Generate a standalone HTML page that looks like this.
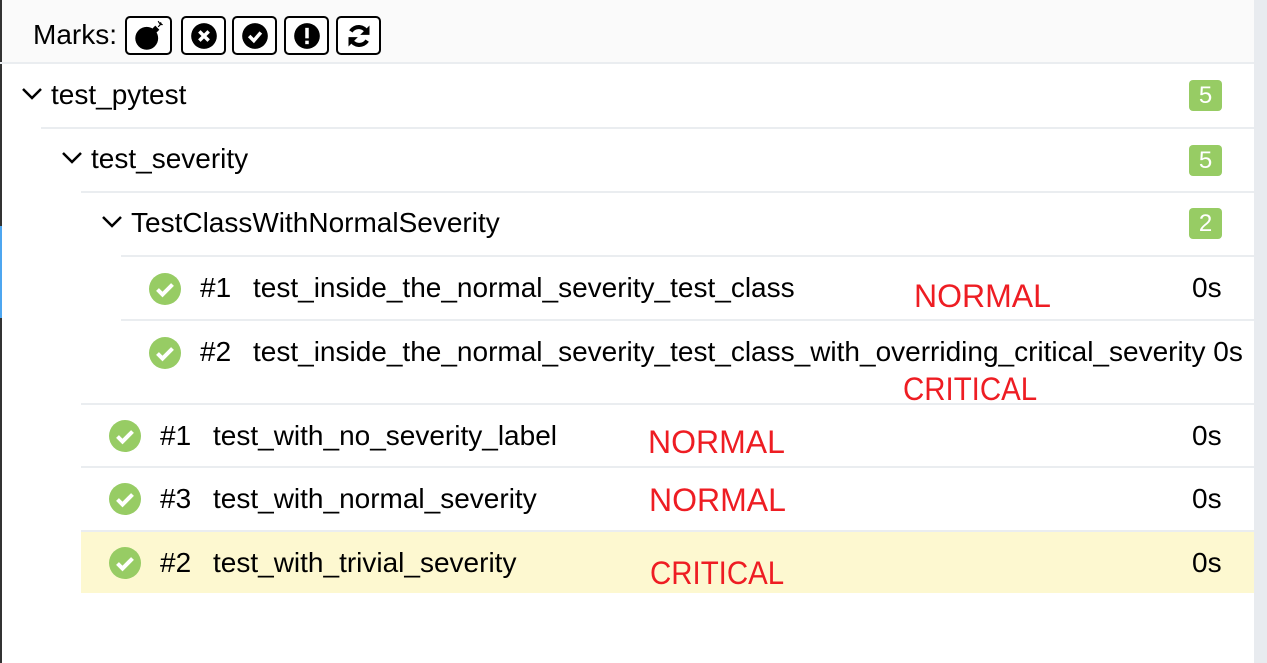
<!DOCTYPE html>
<html><head><meta charset="utf-8"><style>
*{margin:0;padding:0;box-sizing:border-box}
body{width:1267px;height:663px;overflow:hidden;background:#fff;font-family:"Liberation Sans",Arial,sans-serif;position:relative;color:#000}
.a{position:absolute;white-space:nowrap}
.t{font-size:28px;line-height:32px}
.sep{position:absolute;height:2px;background:#eaedf0}
.badge{position:absolute;left:1189px;width:33px;height:31px;background:#97cc64;border-radius:4px;color:#fff;font-size:24px;text-align:center;line-height:31px}
.red{position:absolute;color:#ee1d23;font-size:32px;line-height:36px;white-space:nowrap}
.crit{transform:scaleX(0.92);transform-origin:left center}
.btn{position:absolute;top:16px;width:45px;height:39px;border:2px solid #000;border-radius:5px;background:#fff;display:flex;align-items:center;justify-content:center}
.chk{position:absolute;width:32px;height:32px}
.chev{position:absolute;width:20px;height:12px}
</style></head><body>
<div class="a" style="left:0;top:0;width:1254px;height:63px;background:#fafafa"></div>
<div class="a" style="left:1254px;top:0;width:13px;height:663px;background:#e8ebef"></div>
<div class="a" style="left:0;top:0;width:2px;height:663px;background:#333"></div>
<div class="a" style="left:0;top:226px;width:2px;height:92px;background:#4da6f0"></div>
<div class="sep" style="left:0;top:62px;width:1254px"></div>

<div class="a t" style="left:33px;top:19px">Marks:</div>
<div class="btn" style="left:125px;width:47px"><svg width="32" height="32" viewBox="0 0 28 28"><circle cx="12" cy="16" r="10" fill="#000"/><rect x="17" y="6" width="5" height="5" transform="rotate(45 19.5 8.5)" fill="#000"/><path d="M22 6l2-2M24 2l1 2M22 1l2 3M26 4l-2 0" stroke="#000" stroke-width="1"/></svg></div>
<div class="btn" style="left:181px"><svg width="28" height="28" viewBox="0 0 24 24"><circle cx="12" cy="12" r="11" fill="#000"/><path d="M8 8l8 8M16 8l-8 8" stroke="#fff" stroke-width="3"/></svg></div>
<div class="btn" style="left:232px"><svg width="28" height="28" viewBox="0 0 24 24"><circle cx="12" cy="12" r="11" fill="#000"/><path d="M7 12l4 4 6-7" stroke="#fff" stroke-width="3" fill="none"/></svg></div>
<div class="btn" style="left:284px"><svg width="28" height="28" viewBox="0 0 24 24"><circle cx="12" cy="12" r="11" fill="#000"/><rect x="10.5" y="5" width="3" height="9" fill="#fff"/><rect x="10.5" y="16" width="3" height="3" fill="#fff"/></svg></div>
<div class="btn" style="left:336px"><svg width="28" height="28" viewBox="0 0 24 24"><path d="M19 9A8 8 0 0 0 5 8" stroke="#000" stroke-width="3.5" fill="none"/><path d="M21 3v8h-8z" fill="#000"/><path d="M5 15a8 8 0 0 0 14 1" stroke="#000" stroke-width="3.5" fill="none"/><path d="M3 21v-8h8z" fill="#000"/></svg></div>

<svg class="chev" style="left:22px;top:88px" viewBox="0 0 20 12"><path d="M1 1l9 9 9-9" stroke="#000" stroke-width="2.5" fill="none"/></svg>
<div class="a t" style="left:51px;top:79px">test_pytest</div>
<div class="badge" style="top:80px">5</div>
<div class="sep" style="left:41px;top:127px;width:1213px"></div>

<svg class="chev" style="left:62px;top:152px" viewBox="0 0 20 12"><path d="M1 1l9 9 9-9" stroke="#000" stroke-width="2.5" fill="none"/></svg>
<div class="a t" style="left:91px;top:143px">test_severity</div>
<div class="badge" style="top:145px">5</div>
<div class="sep" style="left:81px;top:191px;width:1173px"></div>

<svg class="chev" style="left:102px;top:216px" viewBox="0 0 20 12"><path d="M1 1l9 9 9-9" stroke="#000" stroke-width="2.5" fill="none"/></svg>
<div class="a t" style="left:131px;top:207px">TestClassWithNormalSeverity</div>
<div class="badge" style="top:208px">2</div>
<div class="sep" style="left:121px;top:255px;width:1133px"></div>

<svg class="chk" style="left:149px;top:273px" viewBox="0 0 32 32"><circle cx="16" cy="16" r="16" fill="#97cc64"/><path d="M8.5 16.5l5 5 10-10" stroke="#fff" stroke-width="4" fill="none"/></svg>
<div class="a t" style="left:200px;top:272px">#1</div>
<div class="a t" style="left:253px;top:272px">test_inside_the_normal_severity_test_class</div>
<div class="a t" style="left:1192px;top:272px">0s</div>
<div class="red" style="left:914px;top:278px">NORMAL</div>
<div class="sep" style="left:121px;top:319px;width:1133px"></div>

<svg class="chk" style="left:149px;top:337px" viewBox="0 0 32 32"><circle cx="16" cy="16" r="16" fill="#97cc64"/><path d="M8.5 16.5l5 5 10-10" stroke="#fff" stroke-width="4" fill="none"/></svg>
<div class="a t" style="left:200px;top:336px">#2</div>
<div class="a t" style="left:253px;top:336px">test_inside_the_normal_severity_test_class_with_overriding_critical_severity 0s</div>
<div class="red crit" style="left:903px;top:371px">CRITICAL</div>
<div class="sep" style="left:81px;top:403px;width:1173px"></div>

<svg class="chk" style="left:109px;top:420px" viewBox="0 0 32 32"><circle cx="16" cy="16" r="16" fill="#97cc64"/><path d="M8.5 16.5l5 5 10-10" stroke="#fff" stroke-width="4" fill="none"/></svg>
<div class="a t" style="left:160px;top:420px">#1</div>
<div class="a t" style="left:213px;top:420px">test_with_no_severity_label</div>
<div class="a t" style="left:1192px;top:420px">0s</div>
<div class="red" style="left:648px;top:424px">NORMAL</div>
<div class="sep" style="left:81px;top:466px;width:1173px"></div>

<svg class="chk" style="left:109px;top:483px" viewBox="0 0 32 32"><circle cx="16" cy="16" r="16" fill="#97cc64"/><path d="M8.5 16.5l5 5 10-10" stroke="#fff" stroke-width="4" fill="none"/></svg>
<div class="a t" style="left:160px;top:483px">#3</div>
<div class="a t" style="left:213px;top:483px">test_with_normal_severity</div>
<div class="a t" style="left:1192px;top:483px">0s</div>
<div class="red" style="left:649px;top:482px">NORMAL</div>

<div class="a" style="left:81px;top:531px;width:1173px;height:62px;background:#fdf8d0"></div>
<div class="sep" style="left:81px;top:530px;width:1173px"></div>
<svg class="chk" style="left:109px;top:547px" viewBox="0 0 32 32"><circle cx="16" cy="16" r="16" fill="#97cc64"/><path d="M8.5 16.5l5 5 10-10" stroke="#fff" stroke-width="4" fill="none"/></svg>
<div class="a t" style="left:160px;top:547px">#2</div>
<div class="a t" style="left:213px;top:547px">test_with_trivial_severity</div>
<div class="a t" style="left:1192px;top:547px">0s</div>
<div class="red crit" style="left:650px;top:555px">CRITICAL</div>
</body></html>
